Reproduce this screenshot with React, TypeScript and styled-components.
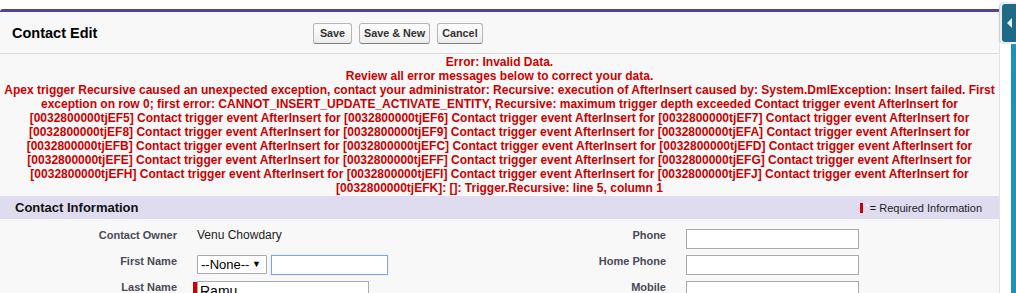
import React from 'react';
import styled, { createGlobalStyle } from 'styled-components';

const GlobalStyle = createGlobalStyle`
    body {
        margin: 0;
        background: #ffffff;
        font-family: "Liberation Sans", Arial, sans-serif;
        font-size: 12px;
        color: #222;
    }
`;

const Page = styled.div`
    display: flex;
    width: 1016px;
    height: 293px;
    overflow: hidden;
`;

const PageBlock = styled.div`
    width: 999px;
    margin-top: 9px;
    background: #f8f8f8;
    border-top: 3px solid #56458c;
    border-right: 1px solid #e3e3e3;
    border-top-left-radius: 3px;
`;

const BlockHeader = styled.div`
    display: flex;
    align-items: center;
    height: 41px;
    border-bottom: 1px solid #dbdbdb;
`;

const Title = styled.h2`
    width: 301px;
    margin: 0;
    padding-left: 12px;
    box-sizing: border-box;
    font-size: 14.5px;
    font-weight: bold;
    color: #000;
`;

const ButtonBar = styled.div`
    display: flex;
    gap: 7px;
    padding-left: 12px;
    padding-top: 1px;
`;

const Button = styled.button`
    min-width: 39px;
    height: 21px;
    padding: 0 4px;
    font-family: "Liberation Sans", Arial, sans-serif;
    font-size: 10.8px;
    font-weight: bold;
    color: #333;
    background: linear-gradient(#ffffff, #ececec);
    border: 1px solid #b5b5b5;
    border-bottom-color: #7f7f7f;
    border-radius: 3px;
`;

const ErrorBox = styled.div`
    padding: 1px 0 1px;
    text-align: center;
    color: #cc0000;
    font-weight: bold;
    font-size: 12px;
    line-height: 14px;
    white-space: nowrap;
`;

const ErrorLine = styled.div``;

const SubHeader = styled.div`
    display: flex;
    align-items: center;
    justify-content: space-between;
    height: 23px;
    padding: 0 17px 0 15px;
    background: #e0dcf0;
`;

const SubTitle = styled.h3`
    margin: 0;
    font-size: 13px;
    font-weight: bold;
    color: #111;
`;

const RequiredNote = styled.span`
    display: flex;
    align-items: center;
    font-size: 11px;
    color: #1a1a2a;
`;

const RequiredMark = styled.span`
    display: inline-block;
    width: 3px;
    height: 10px;
    background: #cc0000;
    margin-right: 3px;
`;

const HiddenStar = styled.span`
    font-size: 7px;
    color: #ffffff;
    align-self: flex-start;
    margin-top: 1px;
    margin-right: 1px;
`;

const FormGrid = styled.div`
    display: grid;
    grid-template-columns: 187px 302px 187px 1fr;
    grid-auto-rows: 26px;
    padding-top: 6px;
`;

const Label = styled.div`
    padding: 4px 10px 0 0;
    text-align: right;
    font-size: 11px;
    line-height: 13px;
    font-weight: bold;
    color: #4a4a56;
`;

const Data = styled.div<{ $required?: boolean }>`
    display: flex;
    align-items: flex-start;
    gap: 4px;
    padding: ${(p) => (p.$required ? '4px 0 0 6px' : '4px 0 0 10px')};
    font-size: 12px;
    line-height: 13px;
    color: #222;
`;

const ReadOnly = styled.span``;

const ReqBar = styled.span`
    width: 4px;
    height: 20px;
    margin-top: 1px;
    margin-right: -4px;
    background: #cc0000;
`;

const TextInput = styled.input<{ $w: number; $focused?: boolean }>`
    width: ${(p) => p.$w}px;
    height: 20px;
    box-sizing: border-box;
    margin: 0;
    padding: 1px 2px;
    font-family: "Liberation Sans", Arial, sans-serif;
    font-size: 14px;
    color: #000;
    background: #fff;
    border: 1px solid ${(p) => (p.$focused ? '#7ea6e6' : '#a9a9a9')};
    box-shadow: ${(p) => (p.$focused ? '0 0 1px #9fc0f0' : 'none')};
    outline: none;
`;

const SelectWrap = styled.span`
    position: relative;
    display: inline-block;
`;

const Select = styled.select`
    appearance: none;
    width: 70px;
    height: 19px;
    margin: 0;
    padding: 0 0 0 3px;
    font-family: "Liberation Sans", Arial, sans-serif;
    font-size: 13px;
    color: #000;
    background: #fff;
    border: 1px solid #a9a9a9;
    border-radius: 1px;
`;

const SelectArrow = styled.span`
    position: absolute;
    right: 6px;
    top: 3px;
    font-size: 9px;
    color: #000;
    pointer-events: none;
`;

const SideDock = styled.div`
    position: relative;
    width: 16px;
    background: #ffffff;
`;

const DockBar = styled.div`
    position: absolute;
    left: 11px;
    top: 40px;
    bottom: 0;
    width: 5px;
    background: #1a92bb;
`;

const DockTab = styled.div`
    position: absolute;
    left: 0;
    top: 2px;
    width: 16px;
    height: 42px;
    box-sizing: border-box;
    display: flex;
    align-items: center;
    padding-left: 5px;
    background: #1f6b86;
    border: 2px solid #eceff1;
    border-right: none;
    border-radius: 5px 0 0 5px;
    box-shadow: -1px 0 1px #c9cdd0;
`;

const errorLines = [
    'Error: Invalid Data.',
    'Review all error messages below to correct your data.',
    'Apex trigger Recursive caused an unexpected exception, contact your administrator: Recursive: execution of AfterInsert caused by: System.DmlException: Insert failed. First',
    'exception on row 0; first error: CANNOT_INSERT_UPDATE_ACTIVATE_ENTITY, Recursive: maximum trigger depth exceeded Contact trigger event AfterInsert for',
    '[0032800000tjEF5] Contact trigger event AfterInsert for [0032800000tjEF6] Contact trigger event AfterInsert for [0032800000tjEF7] Contact trigger event AfterInsert for',
    '[0032800000tjEF8] Contact trigger event AfterInsert for [0032800000tjEF9] Contact trigger event AfterInsert for [0032800000tjEFA] Contact trigger event AfterInsert for',
    '[0032800000tjEFB] Contact trigger event AfterInsert for [0032800000tjEFC] Contact trigger event AfterInsert for [0032800000tjEFD] Contact trigger event AfterInsert for',
    '[0032800000tjEFE] Contact trigger event AfterInsert for [0032800000tjEFF] Contact trigger event AfterInsert for [0032800000tjEFG] Contact trigger event AfterInsert for',
    '[0032800000tjEFH] Contact trigger event AfterInsert for [0032800000tjEFI] Contact trigger event AfterInsert for [0032800000tjEFJ] Contact trigger event AfterInsert for',
    '[0032800000tjEFK]: []: Trigger.Recursive: line 5, column 1',
];

function App() {
    return (
        <Page>
            <GlobalStyle />
            <PageBlock>
                <BlockHeader>
                    <Title>Contact Edit</Title>
                    <ButtonBar>
                        <Button>Save</Button>
                        <Button>Save &amp; New</Button>
                        <Button>Cancel</Button>
                    </ButtonBar>
                </BlockHeader>
                <ErrorBox>
                    {errorLines.map((line, i) => (
                        <ErrorLine key={i}>{line}</ErrorLine>
                    ))}
                </ErrorBox>
                <SubHeader>
                    <SubTitle>Contact Information</SubTitle>
                    <RequiredNote>
                        <RequiredMark />
                        <HiddenStar>*</HiddenStar>= Required Information
                    </RequiredNote>
                </SubHeader>
                <FormGrid>
                    <Label>Contact Owner</Label>
                    <Data>
                        <ReadOnly>Venu Chowdary</ReadOnly>
                    </Data>
                    <Label>Phone</Label>
                    <Data>
                        <TextInput $w={173} />
                    </Data>

                    <Label>First Name</Label>
                    <Data>
                        <SelectWrap>
                            <Select defaultValue="">
                                <option value="">--None--</option>
                            </Select>
                            <SelectArrow>▼</SelectArrow>
                        </SelectWrap>
                        <TextInput $w={117} $focused />
                    </Data>
                    <Label>Home Phone</Label>
                    <Data>
                        <TextInput $w={173} />
                    </Data>

                    <Label>Last Name</Label>
                    <Data $required>
                        <ReqBar />
                        <TextInput $w={172} defaultValue="Ramu" />
                    </Data>
                    <Label>Mobile</Label>
                    <Data>
                        <TextInput $w={173} />
                    </Data>
                </FormGrid>
            </PageBlock>
            <SideDock>
                <DockBar />
                <DockTab>
                    <svg width="5" height="10" viewBox="0 0 5 10">
                        <path d="M5 0 L0 5 L5 10 Z" fill="#e9eef0" />
                    </svg>
                </DockTab>
            </SideDock>
        </Page>
    );
}

export default App;
